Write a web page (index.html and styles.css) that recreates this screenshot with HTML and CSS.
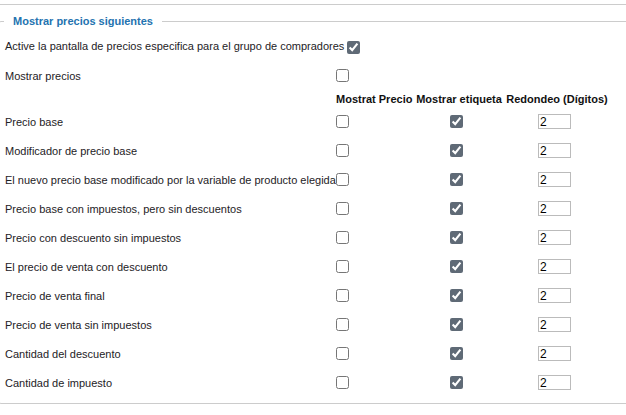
FILE: index.html
```html
<!DOCTYPE html>
<html lang="es">
<head>
    <meta charset="UTF-8">
    <title>Mostrar precios</title>
    <link rel="stylesheet" href="styles.css">
</head>
<body>
    <div class="topline"></div>
    <fieldset class="prices">
        <legend>Mostrar precios siguientes</legend>
        <div class="active-row">
            Active la pantalla de precios especifica para el grupo de compradores
            <input type="checkbox" checked>
        </div>
        <table class="price-table">
            <tr class="row">
                <td class="label">Mostrar precios</td>
                <td class="c-show"><input type="checkbox"></td>
                <td></td>
                <td></td>
            </tr>
            <tr class="head">
                <th></th>
                <th class="c-show">Mostrat Precio</th>
                <th class="c-tag">Mostrar etiqueta</th>
                <th class="c-round">Redondeo (Dígitos)</th>
            </tr>
            <tr class="row">
                <td class="label">Precio base</td>
                <td class="c-show"><input type="checkbox"></td>
                <td class="c-tag"><input type="checkbox" checked></td>
                <td class="c-round"><input class="digits" type="text" value="2"></td>
            </tr>
            <tr class="row">
                <td class="label">Modificador de precio base</td>
                <td class="c-show"><input type="checkbox"></td>
                <td class="c-tag"><input type="checkbox" checked></td>
                <td class="c-round"><input class="digits" type="text" value="2"></td>
            </tr>
            <tr class="row">
                <td class="label">El nuevo precio base modificado por la variable de producto elegida</td>
                <td class="c-show"><input type="checkbox"></td>
                <td class="c-tag"><input type="checkbox" checked></td>
                <td class="c-round"><input class="digits" type="text" value="2"></td>
            </tr>
            <tr class="row">
                <td class="label">Precio base con impuestos, pero sin descuentos</td>
                <td class="c-show"><input type="checkbox"></td>
                <td class="c-tag"><input type="checkbox" checked></td>
                <td class="c-round"><input class="digits" type="text" value="2"></td>
            </tr>
            <tr class="row">
                <td class="label">Precio con descuento sin impuestos</td>
                <td class="c-show"><input type="checkbox"></td>
                <td class="c-tag"><input type="checkbox" checked></td>
                <td class="c-round"><input class="digits" type="text" value="2"></td>
            </tr>
            <tr class="row">
                <td class="label">El precio de venta con descuento</td>
                <td class="c-show"><input type="checkbox"></td>
                <td class="c-tag"><input type="checkbox" checked></td>
                <td class="c-round"><input class="digits" type="text" value="2"></td>
            </tr>
            <tr class="row">
                <td class="label">Precio de venta final</td>
                <td class="c-show"><input type="checkbox"></td>
                <td class="c-tag"><input type="checkbox" checked></td>
                <td class="c-round"><input class="digits" type="text" value="2"></td>
            </tr>
            <tr class="row">
                <td class="label">Precio de venta sin impuestos</td>
                <td class="c-show"><input type="checkbox"></td>
                <td class="c-tag"><input type="checkbox" checked></td>
                <td class="c-round"><input class="digits" type="text" value="2"></td>
            </tr>
            <tr class="row">
                <td class="label">Cantidad del descuento</td>
                <td class="c-show"><input type="checkbox"></td>
                <td class="c-tag"><input type="checkbox" checked></td>
                <td class="c-round"><input class="digits" type="text" value="2"></td>
            </tr>
            <tr class="row">
                <td class="label">Cantidad de impuesto</td>
                <td class="c-show"><input type="checkbox"></td>
                <td class="c-tag"><input type="checkbox" checked></td>
                <td class="c-round"><input class="digits" type="text" value="2"></td>
            </tr>
        </table>
    </fieldset>
</body>
</html>
```

FILE: styles.css
```css
body {
    margin: 0;
    font-family: 'Liberation Sans', Arial, sans-serif;
    font-size: 11px;
    color: #1e2226;
    background: #fff;
}
.topline {
    height: 4px;
    border-bottom: 1px solid #ccc;
}
.prices {
    margin: 9px -4px 0 -3px;
    padding: 3px 0 6px 7px;
    border: 1px solid #ccc;
    border-radius: 4px;
    min-width: 0;
}
.prices legend {
    margin-left: -1px;
    padding: 0 9px;
    font-size: 11px;
    line-height: 15px;
    font-weight: bold;
    color: #2473b0;
}
.active-row {
    height: 29px;
    line-height: 29px;
}
.active-row input {
    vertical-align: middle;
    margin: -2px 0 0 1px;
}
input[type="checkbox"] {
    width: 13px;
    height: 13px;
    margin: 0;
    accent-color: #5f6a76;
    vertical-align: middle;
}
.price-table {
    border-collapse: collapse;
}
.price-table td,
.price-table th {
    padding: 0;
}
.row td {
    height: 29px;
}
.head th {
    height: 17px;
    font-weight: bold;
    color: #111;
    white-space: nowrap;
}
.label {
    width: 331px;
}
.c-show {
    width: 79px;
    text-align: left;
}
.c-tag {
    width: 88px;
    text-align: center;
}
.c-round {
    width: 108px;
    text-align: center;
}
.c-tag input {
    margin-right: 6px;
}
.c-round input {
    margin-right: 5px;
}
.digits {
    width: 33px;
    height: 15px;
    box-sizing: border-box;
    border: 1px solid #bbb;
    padding: 0 1px;
    font-family: 'Liberation Sans', Arial, sans-serif;
    font-size: 12px;
    color: #000;
    vertical-align: middle;
}
```
